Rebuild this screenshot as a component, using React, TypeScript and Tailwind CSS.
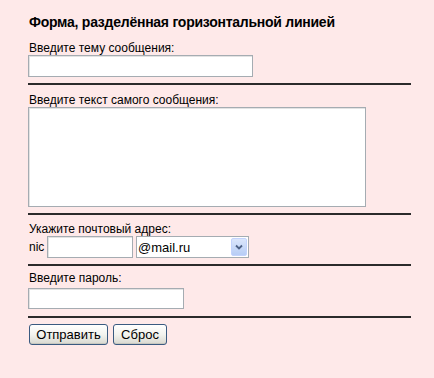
import React from "react";

const inputCls =
  "block border border-[#a5acb2] bg-white shadow-[inset_1px_1px_0_#e3e3e3] outline-none";

function Hr() {
  return <div className="w-[383px] h-[2px] bg-[#2b2b2b]" />;
}

function Btn({ children, w }: { children: React.ReactNode; w: string }) {
  return (
    <button
      className={`${w} h-[21px] rounded-[3px] border border-[#3a5a80] bg-gradient-to-b from-[#ffffff] via-[#f3f3ee] to-[#d8d8d0] text-[13px] leading-[19px] text-black shadow-[inset_0_-1px_0_#c8c8c0]`}
    >
      {children}
    </button>
  );
}

export default function App() {
  return (
    <div
      className="w-[434px] h-[378px] bg-[#fee9e9] text-black"
      style={{ fontFamily: '"Liberation Sans", Arial, sans-serif' }}
    >
      <div className="pl-[28px] pt-[15px]">
        <div className="pl-[1px] text-[14px] font-bold leading-[15px] tracking-[-0.25px]">
          Форма, разделённая горизонтальной линией
        </div>

        <div className="mt-[11px] pl-[1px] text-[12px] leading-[14px]">Введите тему сообщения:</div>
        <input className={`${inputCls} w-[225px] h-[22px]`} />
        <div className="mt-[6px]">
          <Hr />
        </div>

        <div className="mt-[8px] pl-[1px] text-[12px] leading-[14px]">Введите текст самого сообщения:</div>
        <textarea className={`${inputCls} w-[338px] h-[100px] resize-none`} />
        <div className="mt-[6px]">
          <Hr />
        </div>

        <div className="mt-[7px] pl-[1px] text-[12px] leading-[14px]">Укажите почтовый адрес:</div>
        <div className="flex items-center h-[22px]">
          <span className="pl-[1px] text-[12px] leading-[14px] w-[19px]">nic</span>
          <input className={`${inputCls} w-[86px] h-[22px]`} />
          <div className="ml-[3px] w-[113px] h-[22px] border border-[#a5acb2] bg-white flex items-center">
            <span className="flex-1 pl-[1px] text-[13px] leading-[15px]">@mail.ru</span>
            <div className="w-[16px] h-[18px] mr-[1px] rounded-[2px] bg-gradient-to-b from-[#dbe6fb] to-[#b7cdf5] border border-[#c3d3fd] flex items-center justify-center">
              <svg width="8" height="6" viewBox="0 0 8 6">
                <path d="M1 1.5 L4 4.5 L7 1.5" stroke="#4d6185" strokeWidth="1.8" fill="none" />
              </svg>
            </div>
          </div>
        </div>
        <div className="mt-[6px]">
          <Hr />
        </div>

        <div className="mt-[5px] pl-[1px] text-[12px] leading-[14px]">Введите пароль:</div>
        <input type="password" className={`${inputCls} mt-[3px] w-[156px] h-[21px]`} />
        <div className="mt-[7px]">
          <Hr />
        </div>

        <div className="mt-[6px] pl-[1px] flex gap-[5px]">
          <Btn w="w-[79px]">Отправить</Btn>
          <Btn w="w-[54px]">Сброс</Btn>
        </div>
      </div>
    </div>
  );
}
